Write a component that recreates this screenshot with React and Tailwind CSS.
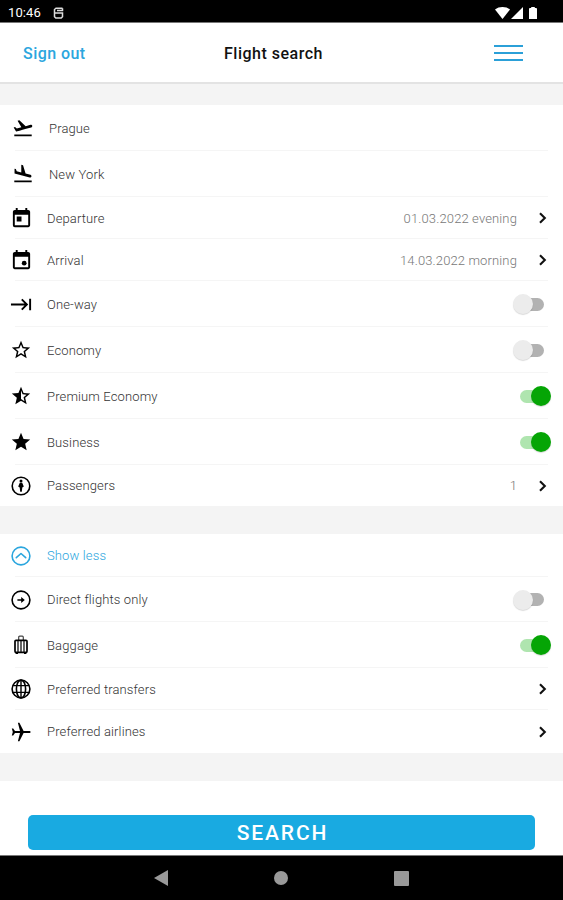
import { useState } from 'react'
import { MdFlightTakeoff, MdFlightLand, MdToday, MdKeyboardTab, MdStarBorder, MdStarHalf, MdStar } from 'react-icons/md'

function ArrivalIcon() {
  return (
    <svg width="23" height="23" viewBox="0 0 24 24" fill="#000">
      <path d="M19 3h-1V1h-2v2H8V1H6v2H5c-1.1 0-2 .9-2 2v14c0 1.1.9 2 2 2h14c1.1 0 2-.9 2-2V5c0-1.1-.9-2-2-2zm0 16H5V8h14z" />
      <circle cx="14.8" cy="14.8" r="2.5" />
    </svg>
  )
}

function PassengerIcon() {
  return (
    <svg width="20" height="20" viewBox="0 0 20 20" fill="none">
      <circle cx="10" cy="10" r="8.8" stroke="#000" strokeWidth="1.6" />
      <circle cx="10" cy="5" r="1.5" fill="#000" />
      <path d="M8.8 6.8h2.4l1.6 3.6-1.5 1.2-.5 4.2H9.2l-.5-4.2-1.5-1.2z" fill="#000" />
    </svg>
  )
}

function ShowLessIcon() {
  return (
    <svg width="20" height="20" viewBox="0 0 20 20" fill="none" stroke="#2ba6de" strokeWidth="1.6">
      <circle cx="10" cy="10" r="8.9" />
      <path d="M5.3 11.7 10 7.5l4.7 4.2" strokeLinecap="round" strokeLinejoin="round" />
    </svg>
  )
}

function DirectIcon() {
  return (
    <svg width="20" height="20" viewBox="0 0 20 20" fill="none">
      <circle cx="10" cy="10" r="8.9" stroke="#000" strokeWidth="1.6" />
      <path d="M6.4 9.2h3.8V6.9L13.8 10l-3.6 3.1v-2.3H6.4z" fill="#000" />
    </svg>
  )
}

function BaggageIcon() {
  return (
    <svg width="20" height="20" viewBox="0 0 20 20" fill="none">
      <path d="M7.7 5V2.2q0-1 1-1h2.6q1 0 1 1V5" stroke="#444" strokeWidth="1.2" />
      <rect x="4" y="5.3" width="12" height="12" rx="1" stroke="#000" strokeWidth="1.7" />
      <path d="M7 6v11M10 6v11M13 6v11" stroke="#111" strokeWidth="1.3" />
      <path d="M4.6 17.5h2.4V19H4.6zM13 17.5h2.4V19H13z" fill="#000" />
    </svg>
  )
}

function GlobeIcon() {
  return (
    <svg width="20" height="20" viewBox="0 0 20 20" fill="none" stroke="#000" strokeWidth="1.6">
      <circle cx="10" cy="10" r="8.9" />
      <ellipse cx="10" cy="10" rx="4.6" ry="8.9" />
      <path d="M10 1v18M2 6.6h16M2 13.4h16" strokeWidth="1.4" />
    </svg>
  )
}

function PlaneIcon() {
  return (
    <svg width="20" height="20" viewBox="0 0 20 20" fill="#000">
      <path d="M19.6 10c0-.7-.6-1-1.4-1h-5.6L8.4 .8H6.9L9 9H4L2.2 6.5H.8L1.8 10 .8 13.5h1.4L4 11h5l-2.1 8.2h1.5l4.2-8.2h5.6c.8 0 1.4-.3 1.4-1z" />
    </svg>
  )
}

function Chevron() {
  return (
    <svg className="mr-4" width="9" height="12" viewBox="0 0 9 12" fill="none" stroke="#111" strokeWidth="2.1">
      <path d="M2 1.3 6.8 6 2 10.7" />
    </svg>
  )
}

function Toggle({ on, onChange }) {
  return (
    <button
      type="button"
      role="switch"
      aria-checked={on}
      onClick={onChange}
      className={on ? 'mr-3 flex h-5 w-[31px] items-center' : 'mr-[19px] flex h-5 w-[31px] items-center'}
    >
      {on ? (
        <>
          <span className="h-[13px] w-[21px] rounded-l-full bg-[#afe5af]" />
          <span className="-ml-[10px] size-5 shrink-0 rounded-full bg-[#05a505] shadow-[0_1px_1px_rgba(0,0,0,0.15)]" />
        </>
      ) : (
        <>
          <span className="z-10 size-5 shrink-0 rounded-full bg-[#ececec] shadow-[0_1px_1px_rgba(0,0,0,0.15)]" />
          <span className="-ml-[10px] h-[13px] w-[21px] rounded-r-full bg-[#b2b2b2]" />
        </>
      )}
    </button>
  )
}

function Row({ icon, label, height, value, arrow, toggle, onToggle, wide, blue, last }) {
  return (
    <div className={`relative flex items-center ${height}`}>
      <span className={`flex w-5 shrink-0 justify-center [&>svg]:shrink-0 ${wide ? 'ml-[13px]' : 'ml-[11px]'}`}>{icon}</span>
      <span className={`ml-4 flex-1 pt-px ${blue ? 'text-[#2ba6de]' : 'text-[#333]'}`}>{label}</span>
      {value && <span className="mr-[21px] pt-px text-[#777]">{value}</span>}
      {arrow && <Chevron />}
      {toggle !== undefined && <Toggle on={toggle} onChange={onToggle} />}
      {!last && <span className="absolute right-[15px] bottom-0 left-[15px] h-px bg-[#f5f5f5]" />}
    </div>
  )
}

export default function App() {
  const [opts, setOpts] = useState({
    oneWay: false,
    economy: false,
    premium: true,
    business: true,
    direct: false,
    baggage: true,
  })

  function flip(key) {
    setOpts(o => ({ ...o, [key]: !o[key] }))
  }

  return (
    <div className="flex h-[900px] w-[563px] flex-col overflow-hidden bg-white font-[Roboto,sans-serif] text-[13px] font-light tracking-[0.13px]">

      {/* Status bar */}
      <div className="flex h-[23px] shrink-0 items-center border-b border-[#777] bg-black pt-[3px] pl-2 text-white">
        <span className="text-[13px] font-normal tracking-[0.1px]">10:46</span>
        <svg className="ml-3" width="11" height="12" viewBox="0 0 11 12" fill="none" stroke="#ddd" strokeWidth="1.5">
          <path d="M9.5 1.2H3L1.5 2.5V6h8v3.7L8.2 11H2.8L1.5 9.7V6M9.5 1.2v2.2H4" />
        </svg>
        <svg className="mr-[25px] ml-auto" width="44" height="14" viewBox="0 0 44 14" fill="#fff">
          <path d="M1 3.5C5 .2 12 .2 16 3.5L8.5 13z" />
          <path d="M17 13 29 1v12z" />
          <path d="M35 3.2c0-.8.4-1.2 1.2-1.2h1V1h3.6v1h1c.8 0 1.2.4 1.2 1.2V13h-8z" />
        </svg>
      </div>

      {/* Header */}
      <div className="flex h-[61px] shrink-0 items-center border-b-2 border-[#e3e3e3] pr-10 pl-[23px] text-[16px] font-medium">
        <span className="w-[201px] pt-0.5 tracking-[0.45px] text-[#2ba6de]">Sign out</span>
        <span className="flex-1 pt-0.5 tracking-[0.5px] text-[#111]">Flight search</span>
        <button type="button" aria-label="Menu" className="flex flex-col gap-[5px]">
          <span className="h-0.5 w-[29px] bg-[#2ba0d8]" />
          <span className="h-0.5 w-[29px] bg-[#2ba0d8]" />
          <span className="h-0.5 w-[29px] bg-[#2ba0d8]" />
        </button>
      </div>

      <div className="h-[21px] shrink-0 bg-[#f4f4f4]" />

      <div className="shrink-0">
        <Row wide height="h-[46px]" icon={<MdFlightTakeoff size={22} />} label="Prague" />
        <Row wide height="h-[46px]" icon={<MdFlightLand size={22} />} label="New York" />
        <Row height="h-[42px]" icon={<MdToday size={23} />} label="Departure" value="01.03.2022 evening" arrow />
        <Row height="h-[42px]" icon={<ArrivalIcon />} label="Arrival" value="14.03.2022 morning" arrow />
        <Row height="h-[46px]" icon={<MdKeyboardTab size={23} />} label="One-way" toggle={opts.oneWay} onToggle={() => flip('oneWay')} />
        <Row height="h-[46px]" icon={<MdStarBorder size={22} />} label="Economy" toggle={opts.economy} onToggle={() => flip('economy')} />
        <Row height="h-[46px]" icon={<MdStarHalf size={22} />} label="Premium Economy" toggle={opts.premium} onToggle={() => flip('premium')} />
        <Row height="h-[46px]" icon={<MdStar size={22} />} label="Business" toggle={opts.business} onToggle={() => flip('business')} />
        <Row height="h-[41px]" icon={<PassengerIcon />} label="Passengers" value="1" arrow last />
      </div>

      <div className="h-7 shrink-0 bg-[#f4f4f4]" />

      <div className="shrink-0">
        <Row height="h-[43px]" icon={<ShowLessIcon />} label="Show less" blue />
        <Row height="h-[45px]" icon={<DirectIcon />} label="Direct flights only" toggle={opts.direct} onToggle={() => flip('direct')} />
        <Row height="h-[46px]" icon={<BaggageIcon />} label="Baggage" toggle={opts.baggage} onToggle={() => flip('baggage')} />
        <Row height="h-[42px]" icon={<GlobeIcon />} label="Preferred transfers" arrow />
        <Row height="h-[43px]" icon={<PlaneIcon />} label="Preferred airlines" arrow last />
      </div>

      <div className="h-7 shrink-0 bg-[#f4f4f4]" />

      <div className="flex flex-1 items-end px-7 pb-[5px]">
        <button type="button" className="h-[35px] w-full rounded-[5px] bg-[#19aae1] pt-0.5 pl-0.5 text-[21px] font-medium tracking-[1.9px] text-white">
          SEARCH
        </button>
      </div>

      {/* Android navigation */}
      <div className="flex h-[45px] shrink-0 items-center justify-center gap-[106px] border-t border-[#777] bg-black">
        <svg width="14" height="16" viewBox="0 0 14 16" fill="#999"><path d="M0 8 14 0v16z" /></svg>
        <span className="size-3.5 rounded-full bg-[#999]" />
        <span className="size-[15px] rounded-[1px] bg-[#999]" />
      </div>
    </div>
  )
}
